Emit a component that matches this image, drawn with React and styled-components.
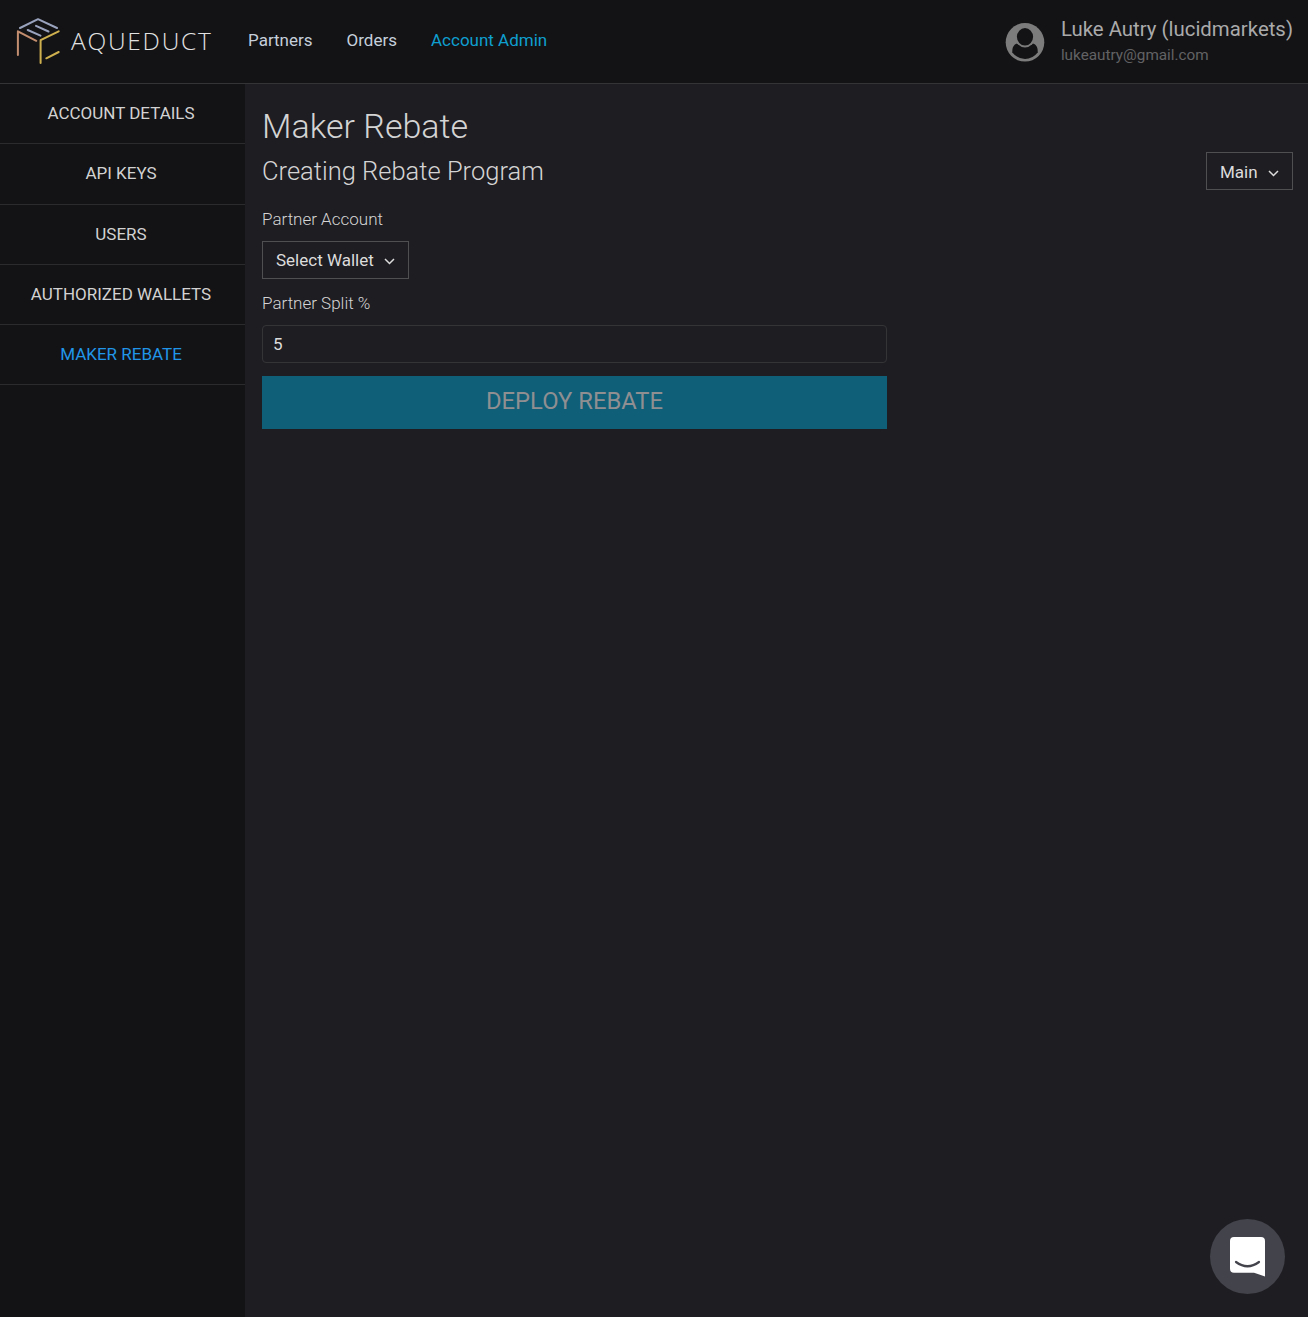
import React from "react";
import styled, { createGlobalStyle } from "styled-components";

const Global = createGlobalStyle`
  *, *::before, *::after { box-sizing: border-box; }
  body {
    margin: 0;
    background: #1e1d22;
    color: #d4d4d4;
    font-family: Roboto, "Liberation Sans", sans-serif;
    font-size: 17px;
  }
`;

const Page = styled.div`
  display: flex;
  flex-direction: column;
  height: 1317px;
  overflow: hidden;
`;

const Header = styled.header`
  display: flex;
  flex: none;
  align-items: flex-start;
  height: 84px;
  padding-right: 15px;
  background: #131315;
  border-bottom: 1px solid #343437;
`;

const Brand = styled.div`
  display: flex;
  width: 248px;
  padding: 17px 0 0 15px;
`;

const BrandName = styled.span`
  margin: 9px 0 0 10px;
  font-family: "Open Sans", sans-serif;
  font-weight: 300;
  font-size: 24.5px;
  line-height: 30px;
  letter-spacing: 1.75px;
  color: #e2e2e2;
`;

const Nav = styled.nav`
  display: flex;
  gap: 34px;
  padding-top: 30px;
`;

const NavLink = styled.a`
  line-height: 20px;
  color: ${(p) => (p.$active ? "#0f9fcf" : "#c5cfdb")};
`;

const User = styled.div`
  display: flex;
  margin-left: auto;
  gap: 16px;
  padding-top: 16px;
`;

const Avatar = styled.svg`
  width: 40px;
  height: 40px;
  margin-top: 6px;
`;

const UserName = styled.div`
  font-size: 20.4px;
  line-height: 26px;
  color: #aaaaab;
`;

const UserEmail = styled.div`
  font-size: 15.3px;
  line-height: 26px;
  color: #626264;
`;

const Body = styled.div`
  display: flex;
  flex: 1;
  min-height: 0;
`;

const Sidebar = styled.aside`
  flex: none;
  width: 245px;
  background: #131315;
`;

const SideItem = styled.a`
  display: flex;
  align-items: center;
  justify-content: center;
  height: 60.29px;
  padding: 0 3px 1px 0;
  border-bottom: 1px solid #2b2b2d;
  color: ${(p) => (p.$active ? "#2196e8" : "#d2d2d2")};
`;

const Main = styled.main`
  flex: 1;
  padding: 20px 15px 0 17px;
`;

const Title = styled.h1`
  margin: 0;
  font-size: 34px;
  font-weight: 300;
  line-height: 44px;
`;

const SubHeader = styled.div`
  display: flex;
  justify-content: space-between;
  align-items: flex-start;
  height: 61px;
  padding-top: 4px;
`;

const Subtitle = styled.h2`
  margin: 3px 0 0;
  font-size: 25.5px;
  font-weight: 300;
  line-height: 32px;
`;

const Dropdown = styled.button`
  display: flex;
  align-items: center;
  justify-content: space-between;
  width: ${(p) => p.$width};
  height: 38px;
  padding: ${(p) => p.$padTop || "0"} 13px 0;
  border: 1px solid #4f4f52;
  background: transparent;
  color: #dcdcdc;
  font: inherit;
`;

const Chevron = styled.svg`
  width: 11px;
  height: 7px;
  margin-top: 3px;
`;

const Form = styled.form`
  display: flex;
  flex-direction: column;
  align-items: flex-start;
  width: 625px;
`;

const Label = styled.label`
  margin: ${(p) => p.$top || "0"} 0 12px;
  font-weight: 300;
  line-height: 20px;
`;

const Input = styled.input`
  width: 100%;
  height: 38px;
  padding: 0 10px;
  border: 1px solid #343437;
  border-radius: 4px;
  background: transparent;
  color: #dcdcdc;
  font: inherit;
  outline: none;
`;

const Deploy = styled.button`
  width: 100%;
  height: 53px;
  margin-top: 13px;
  padding: 0 0 3px;
  border: 0;
  background: #0f5f78;
  color: #8f8f92;
  font: inherit;
  font-size: 23.8px;
`;

const Chat = styled.button`
  position: fixed;
  right: 23px;
  bottom: 23px;
  display: block;
  width: 75px;
  height: 75px;
  padding: 0;
  border: 0;
  border-radius: 50%;
  background: #42434b;
`;

const Logo = () => (
  <svg width="46" height="48" viewBox="15 17 46 48" fill="none" strokeWidth="2" strokeLinecap="round" strokeLinejoin="round">
    <path d="M20 28 L38 19.2 L57 28 M36 25.8 L48.5 31.5 M27.7 30 L40.5 35.7" stroke="#9aa3bd" />
    <path d="M17.9 55 V31.3 L36.3 40.8" stroke="#c38d70" />
    <path d="M40.6 63 V40.2 L58.7 31.3 M46.3 58.3 L58.7 52" stroke="#cfb04f" />
  </svg>
);

const Arrow = () => (
  <Chevron viewBox="0 0 11 7" fill="none" stroke="#dcdcdc" strokeWidth="1.5">
    <path d="M1 1 L5.5 5.5 L10 1" />
  </Chevron>
);

const sections = ["ACCOUNT DETAILS", "API KEYS", "USERS", "AUTHORIZED WALLETS", "MAKER REBATE"];

export default function App() {
  return (
    <Page>
      <Global />
      <Header>
        <Brand>
          <Logo />
          <BrandName>AQUEDUCT</BrandName>
        </Brand>
        <Nav>
          <NavLink>Partners</NavLink>
          <NavLink>Orders</NavLink>
          <NavLink $active>Account Admin</NavLink>
        </Nav>
        <User>
          <Avatar viewBox="0 0 40 40">
            <circle cx="20" cy="20.3" r="19.3" fill="#7c7c7c" />
            <path d="M7.3 30.5 C7 25.5 9 22 12.5 21.6 H27.5 C31 22 33 25.5 32.7 30.5 Q27.5 37 20 37 Q12.5 37 7.3 30.5 Z" fill="#131315" />
            <ellipse cx="20" cy="15" rx="10.2" ry="10.4" fill="#7c7c7c" />
            <ellipse cx="20" cy="14.8" rx="8.1" ry="8.7" fill="#131315" />
          </Avatar>
          <div>
            <UserName>Luke Autry (lucidmarkets)</UserName>
            <UserEmail>lukeautry@gmail.com</UserEmail>
          </div>
        </User>
      </Header>
      <Body>
        <Sidebar>
          {sections.map((name) => (
            <SideItem key={name} $active={name === "MAKER REBATE"}>{name}</SideItem>
          ))}
        </Sidebar>
        <Main>
          <Title>Maker Rebate</Title>
          <SubHeader>
            <Subtitle>Creating Rebate Program</Subtitle>
            <Dropdown $width="87px" $padTop="2px">Main<Arrow /></Dropdown>
          </SubHeader>
          <Form>
            <Label>Partner Account</Label>
            <Dropdown type="button" $width="147px">Select Wallet<Arrow /></Dropdown>
            <Label $top="14px">Partner Split %</Label>
            <Input defaultValue="5" />
            <Deploy type="button">DEPLOY REBATE</Deploy>
          </Form>
        </Main>
      </Body>
      <Chat aria-label="Chat">
        <svg width="75" height="75" viewBox="0 0 75 75" fill="none">
          <path d="M24 18 H51 Q55 18 55 22 V57.5 Q49 55.5 44 53.8 H24 Q20 53.8 20 49.8 V22 Q20 18 24 18 Z" fill="#fff" />
          <path d="M26 43 Q37.5 51.5 49 43" stroke="#42434b" strokeWidth="2.2" strokeLinecap="round" />
        </svg>
      </Chat>
    </Page>
  );
}
